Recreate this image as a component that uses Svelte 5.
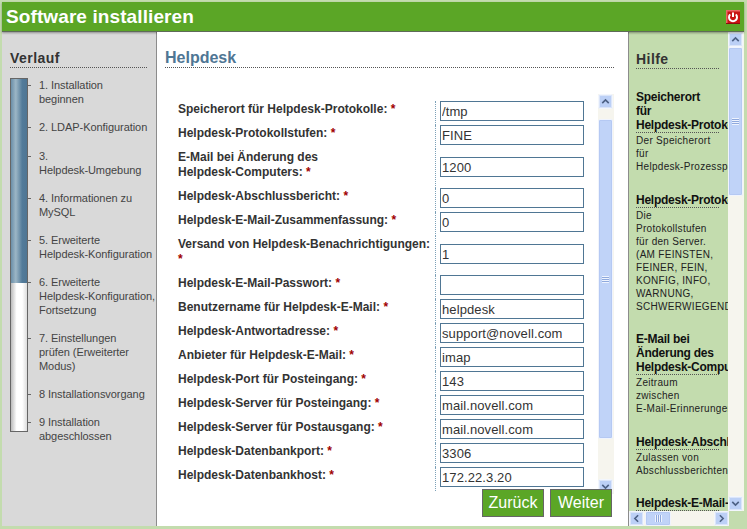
<script>
  const steps = [
    ['1. Installation', 'beginnen'],
    ['2. LDAP-Konfiguration'],
    ['3.', 'Helpdesk-Umgebung'],
    ['4. Informationen zu', 'MySQL'],
    ['5. Erweiterte', 'Helpdesk-Konfiguration'],
    ['6. Erweiterte', 'Helpdesk-Konfiguration,', 'Fortsetzung'],
    ['7. Einstellungen', 'prüfen (Erweiterter', 'Modus)'],
    ['8 Installationsvorgang'],
    ['9 Installation', 'abgeschlossen']
  ];
  const fields = [
    [['Speicherort für Helpdesk-Protokolle:'], '/tmp'],
    [['Helpdesk-Protokollstufen:'], 'FINE'],
    [['E-Mail bei Änderung des', 'Helpdesk-Computers:'], '1200'],
    [['Helpdesk-Abschlussbericht:'], '0'],
    [['Helpdesk-E-Mail-Zusammenfassung:'], '0'],
    [['Versand von Helpdesk-Benachrichtigungen:', ''], '1'],
    [['Helpdesk-E-Mail-Passwort:'], ''],
    [['Benutzername für Helpdesk-E-Mail:'], 'helpdesk'],
    [['Helpdesk-Antwortadresse:'], 'support@novell.com'],
    [['Anbieter für Helpdesk-E-Mail:'], 'imap'],
    [['Helpdesk-Port für Posteingang:'], '143'],
    [['Helpdesk-Server für Posteingang:'], 'mail.novell.com'],
    [['Helpdesk-Server für Postausgang:'], 'mail.novell.com'],
    [['Helpdesk-Datenbankport:'], '3306'],
    [['Helpdesk-Datenbankhost:'], '172.22.3.20']
  ];
  const help = [
    [['Speicherort', 'für', 'Helpdesk-Protokolle'], ['Der Speicherort', 'für', 'Helpdesk-Prozessprotokolle']],
    [['Helpdesk-Protokollstufen'], ['Die', 'Protokollstufen', 'für den Server.', '(AM FEINSTEN,', 'FEINER, FEIN,', 'KONFIG, INFO,', 'WARNUNG,', 'SCHWERWIEGEND)']],
    [['E-Mail bei', 'Änderung des', 'Helpdesk-Computers'], ['Zeitraum', 'zwischen', 'E-Mail-Erinnerungen']],
    [['Helpdesk-Abschlussbericht'], ['Zulassen von', 'Abschlussberichten.']],
    [['Helpdesk-E-Mail-'], []]
  ];
</script>

<div class="page">
  <header class="top">
    <h1>Software installieren</h1>
    <button class="power" aria-label="Schließen">
      <svg viewBox="0 0 14 14" width="14" height="14">
        <rect width="14" height="14" fill="#c81414" />
        <path d="M0 0h14v1.5H1.5V14H0z" fill="#e86a66" />
        <path d="M0 14v-1h14v1z" fill="#8e0c0c" />
        <path d="M4.2 4.4a4 4 0 1 0 5.6 0" fill="none" stroke="#fff" stroke-width="2" />
        <path d="M7 2.4v4.6" stroke="#fff" stroke-width="2" />
      </svg>
    </button>
  </header>
  <div class="body">
    <aside class="side">
      <h2>Verlauf</h2>
      <div class="track">
        <div class="bar"><div class="done"></div><div class="todo"></div></div>
        <ol>
          {#each steps as lines}
            <li>{#each lines as l}<span>{l}</span>{/each}</li>
          {/each}
        </ol>
      </div>
    </aside>
    <main class="main">
      <h2 class="title">Helpdesk</h2>
      <div class="formwrap">
        <div class="form">
          {#each fields as f}
            <div class="lab">
              {#each f[0] as l, i}
                {#if i === f[0].length - 1}
                  <span>{l} <b>*</b></span>
                {:else}
                  <span>{l}</span>
                {/if}
              {/each}
            </div>
            <div class="val"><input value={f[1]} /></div>
          {/each}
        </div>
        <div class="sb v formbar">
          <div class="arrow"><svg viewBox="0 0 16 16"><path d="M4 10l4-4 4 4" /></svg></div>
          <div class="gap small"></div>
          <div class="thumb"><i></i></div>
          <div class="gap"></div>
          <div class="arrow"><svg viewBox="0 0 16 16"><path d="M4 6l4 4 4-4" /></svg></div>
        </div>
      </div>
      <div class="actions">
        <button>Zurück</button>
        <button>Weiter</button>
      </div>
    </main>
    <section class="helpbox">
      <div class="helpmain">
        <div class="helptext">
          <h2>Hilfe</h2>
          {#each help as h}
            <div class="item">
              <h3>{#each h[0] as l}<span>{l}</span>{/each}</h3>
              {#each h[1] as l}<p>{l}</p>{/each}
            </div>
          {/each}
        </div>
        <div class="sb v helpbar">
          <div class="arrow"><svg viewBox="0 0 16 16"><path d="M4 10l4-4 4 4" /></svg></div>
          <div class="thumb hthumb"><i></i></div>
          <div class="gap"></div>
          <div class="arrow"><svg viewBox="0 0 16 16"><path d="M4 6l4 4 4-4" /></svg></div>
        </div>
      </div>
      <div class="sb h">
        <div class="arrow"><svg viewBox="0 0 16 16"><path d="M10 4l-4 4 4 4" /></svg></div>
        <div class="thumb"><i></i></div>
        <div class="gap"></div>
        <div class="arrow"><svg viewBox="0 0 16 16"><path d="M6 4l4 4-4 4" /></svg></div>
      </div>
    </section>
  </div>
</div>

<style>
  :global(body) { margin: 0; background: #c3dcae; }
  .page {
    width: 747px; height: 529px; box-sizing: border-box; padding: 2px 3px 3px 2px;
    display: flex; flex-direction: column; overflow: hidden;
    font-family: "Liberation Sans", Arial, sans-serif; color: #333;
  }
  .top {
    height: 30px; flex: none; background: #5ba626; display: flex; align-items: center;
    justify-content: space-between; padding: 0 4px 0 4px; box-sizing: border-box;
    border-bottom: 1px solid #5e6b58; box-shadow: 0 1px 2px rgba(0,0,0,.35); position: relative;
  }
  h1 { margin: 0; color: #fff; font-size: 19px; font-weight: bold; letter-spacing: .1px; }
  .power { padding: 0; border: 0; width: 14px; height: 14px; background: none; display: block; }
  .power svg { display: block; }
  .body { flex: 1; display: flex; min-height: 0; }
  .side {
    width: 155px; flex: none; background: #d9d9d9; border-right: 1px solid #8c8c8c;
    box-sizing: border-box; padding: 18px 9px 0 8px;
  }
  .side h2 {
    margin: 0; font-size: 14px; line-height: 17px; font-weight: bold; color: #333; letter-spacing: .45px;
    border-bottom: 1px dotted #555; padding-bottom: 0; width: 137px;
  }
  .track { display: flex; margin-top: 10px; }
  .bar {
    width: 16px; height: 352px; border: 1px solid #666; flex: none; display: flex; flex-direction: column;
  }
  .done { height: 204px; background: linear-gradient(90deg, #6b8fa9, #9cb6c6 30%, #527b9a 70%, #4f7694); }
  .todo { flex: 1; background: linear-gradient(90deg, #bbb, #fff 35%, #fff 70%, #ddd); }
  ol { list-style: none; margin: 0; padding: 0; font-size: 11px; line-height: 14px; color: #444; width: 118px; flex: none; }
  li { margin-bottom: 14px; padding-left: 11px; position: relative; white-space: nowrap; letter-spacing: -.06px; }
  li:nth-child(2) { margin-bottom: 15px; }
  li::before { content: ""; position: absolute; left: 0; top: 7px; width: 3px; height: 1px; background: #666; }
  li span { display: block; }
  .main { width: 471px; flex: none; background: #fff; position: relative; box-sizing: border-box; padding: 16px 14px 0 8px; }
  .title {
    margin: 0; font-size: 16px; line-height: 19px; font-weight: bold; color: #4f7694; letter-spacing: 0;
    border-bottom: 1px dotted #555; padding-bottom: 0;
  }
  .formwrap { position: relative; display: flex; height: 400px; margin-top: 26px; overflow: hidden; margin-right: -2px; }
  .form {
    width: 433px; flex: none; display: grid; grid-template-columns: 268px 165px; padding: 7px 0 0 13px;
    box-sizing: border-box; align-content: start;
  }
  .lab { font-size: 12px; line-height: 15px; font-weight: bold; color: #333; padding: 1px 0 8px; box-sizing: border-box; align-self: start; }
  .lab span { display: block; white-space: nowrap; }
  .lab b { color: #a00000; }
  .val {
    align-self: stretch; border-left: 1px dotted #7da1b8; display: flex; align-items: center; padding: 0 0 4px 4px; margin-left: -11px;
  }
  input {
    width: 144px; height: 20px; box-sizing: border-box; border: 1px solid #4f7694; padding: 1px 0 0 1px; margin: 0;
    font: 13px/16px "Liberation Sans", Arial, sans-serif; color: #333; border-radius: 0; outline: 0; background: #fff; letter-spacing: .1px;
  }
  .sb { background: #f6f5ee; display: flex; flex: none; }
  .sb.v { flex-direction: column; width: 16px; }
  .sb.h { height: 15px; width: 100px; align-items: stretch; }
  .arrow {
    width: 15px; height: 15px; flex: none; background: #bcd0f6; border: 1px solid #f2f6fd; box-sizing: border-box; border-radius: 2px;
    box-shadow: 0 0 0 1px #dbe5f9 inset;
  }
  .arrow svg { display: block; width: 100%; height: 100%; }
  .arrow path { fill: none; stroke: #4d6185; stroke-width: 2; }
  .gap { flex: 1; }
  .gap.small { flex: none; height: 10px; }
  .thumb {
    flex: 1; background: #c0d3f8; border: 1px solid #f0f4fd; border-radius: 2px; box-sizing: border-box;
    display: flex; align-items: center; justify-content: center; box-shadow: 0 0 0 1px #b5c9f3 inset;
  }
  .formbar .thumb { flex: none; height: 320px; width: 15px; }
  .thumb i { display: block; width: 7px; height: 7px; background: repeating-linear-gradient(#eef3fe 0 1px, #8fa9dd 1px 2px); }
  .sb.h .thumb { flex: none; width: 26px; height: 15px; margin-left: 1px; }
  .sb.h .thumb i { background: repeating-linear-gradient(90deg, #eef3fe 0 1px, #8fa9dd 1px 2px); }
  .sb.h .gap { flex: 1; }
  .actions { position: absolute; right: 16px; top: 457px; display: flex; gap: 6px; }
  .actions button {
    width: 62px; height: 28px; box-sizing: border-box; background: #5ba626; color: #fff; border: 1px solid #666;
    font: 16px "Liberation Sans", Arial, sans-serif; padding: 0;
  }
  .helpbox { flex: 1; background: #c3dcae; border-left: 1px solid #8c8c8c; display: flex; flex-direction: column; min-width: 0; box-sizing: border-box; }
  .helpmain { flex: 1; display: flex; min-height: 0; }
  .helptext { width: 99px; flex: none; overflow: hidden; padding-left: 7px; box-sizing: border-box; padding-top: 19px; }
  .helptext h2 {
    margin: 0 0 21px; width: 83px; font-size: 14px; line-height: 17px; font-weight: bold; color: #333; letter-spacing: .45px;
    border-bottom: 1px dotted #555; padding-bottom: 0;
  }
  .item { margin-bottom: 19.5px; }
  h3 {
    margin: 0 0 1px; width: 83px; white-space: nowrap; font-size: 12px; line-height: 14px; font-weight: bold; color: #111;
    border-bottom: 1px dotted #555; padding-bottom: 0; letter-spacing: -.25px;
  }
  h3 span { display: block; }
  .helptext p { margin: 0; font-size: 10px; line-height: 13px; white-space: nowrap; color: #222; letter-spacing: .3px; }
  .helpbar { height: 100%; }
  .helpbar .hthumb { flex: none; height: 149px; width: 15px; }
</style>
